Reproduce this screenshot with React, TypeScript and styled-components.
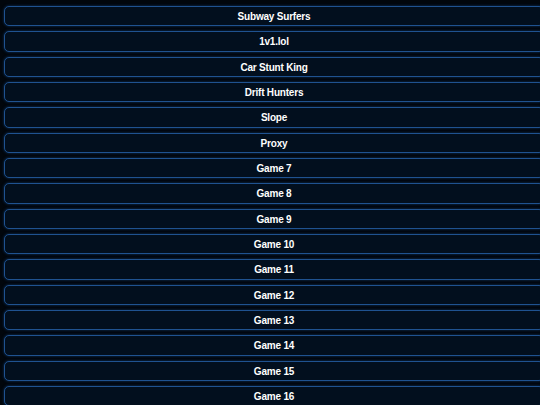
import React from "react";
import styled, { createGlobalStyle } from "styled-components";

const Global = createGlobalStyle`
  html, body {
    margin: 0;
    padding: 0;
    background: #01060c;
    overflow: hidden;
  }
`;

const List = styled.div`
  display: flex;
  flex-direction: column;
  gap: 5px;
  padding: 6px 0 0 4px;
  width: 540px;
  box-sizing: border-box;
`;

const GameButton = styled.button`
  display: block;
  box-sizing: border-box;
  width: 540px;
  height: 20.33px;
  margin: 0;
  padding: 0;
  background: #020f1e;
  border: 1px solid #1f5290;
  border-radius: 5px;
  box-shadow: 0 0 3px rgba(30, 95, 180, 0.5);
  color: #ffffff;
  font-family: "Liberation Sans", Arial, sans-serif;
  font-weight: bold;
  font-size: 10px;
  letter-spacing: -0.2px;
  line-height: 19.5px;
  text-align: center;
  flex-shrink: 0;
`;

const games = [
  "Subway Surfers",
  "1v1.lol",
  "Car Stunt King",
  "Drift Hunters",
  "Slope",
  "Proxy",
  "Game 7",
  "Game 8",
  "Game 9",
  "Game 10",
  "Game 11",
  "Game 12",
  "Game 13",
  "Game 14",
  "Game 15",
  "Game 16",
];

export default function App() {
  return (
    <>
      <Global />
      <List>
        {games.map((g) => (
          <GameButton key={g}>{g}</GameButton>
        ))}
      </List>
    </>
  );
}
